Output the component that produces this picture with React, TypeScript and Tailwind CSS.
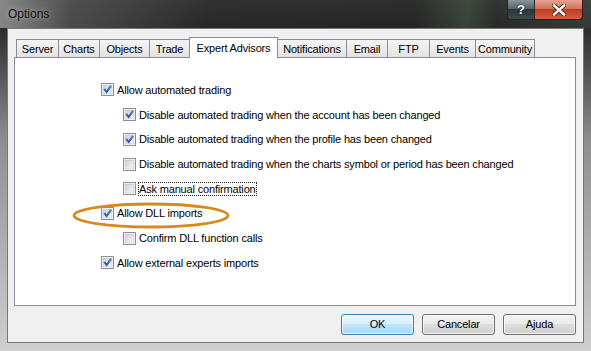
import React from "react";

const tabs = [
  { label: "Server", w: "w-[43px]" },
  { label: "Charts", w: "w-[42px]" },
  { label: "Objects", w: "w-[51px]" },
  { label: "Trade", w: "w-[41px]" },
  { label: "Expert Advisors", w: "w-[89px]", active: true },
  { label: "Notifications", w: "w-[70px]" },
  { label: "Email", w: "w-[42px]" },
  { label: "FTP", w: "w-[43px]" },
  { label: "Events", w: "w-[47px]" },
  { label: "Community", w: "w-[60px]" },
];

const options = [
  { label: "Allow automated trading", level: 1, checked: true },
  { label: "Disable automated trading when the account has been changed", level: 2, checked: true },
  { label: "Disable automated trading when the profile has been changed", level: 2, checked: true },
  { label: "Disable automated trading when the charts symbol or period has been changed", level: 2, checked: false },
  { label: "Ask manual confirmation", level: 2, checked: false, focused: true },
  { label: "Allow DLL imports", level: 1, checked: true },
  { label: "Confirm DLL function calls", level: 2, checked: false },
  { label: "Allow external experts imports", level: 1, checked: true },
];

function CheckBox({ checked }: { checked: boolean }) {
  return (
    <svg width="13" height="13" viewBox="0 0 13 13" className="shrink-0">
      <defs>
        <linearGradient id="cbfill" x1="0" y1="0" x2="1" y2="1">
          <stop offset="0" stopColor="#cbcfd5" />
          <stop offset="1" stopColor="#f7f7f7" />
        </linearGradient>
        <linearGradient id="cbtick" x1="0" y1="0" x2="0" y2="1">
          <stop offset="0" stopColor="#5b8de0" />
          <stop offset="1" stopColor="#1f4aa0" />
        </linearGradient>
      </defs>
      <rect x="0.5" y="0.5" width="12" height="12" fill="#fff" stroke="#8e8f8f" />
      <rect x="2" y="2" width="9" height="9" fill="url(#cbfill)" stroke="#b8bcc2" strokeWidth="0.5" />
      {checked && <polygon points="2.3,6.6 4.1,5.2 5.6,7.2 9.2,2.1 11,3.4 5.7,10.6" fill="url(#cbtick)" />}
    </svg>
  );
}

function Button({ label, primary }: { label: string; primary?: boolean }) {
  return (
    <div
      className={
        primary
          ? "flex h-[21px] w-[73px] items-center justify-center rounded-[3px] border border-[#3c7fb1] bg-[linear-gradient(#eaf6fd_0%,#d9f0fc_45%,#bee6fd_50%,#a7d9f5_100%)] shadow-[inset_0_0_0_1px_rgba(255,255,255,0.7)]"
          : "flex h-[21px] w-[73px] items-center justify-center rounded-[3px] border border-[#707070] bg-[linear-gradient(#f2f2f2_0%,#ebebeb_45%,#dddddd_50%,#cfcfcf_100%)] shadow-[inset_0_0_0_1px_rgba(255,255,255,0.7)]"
      }
    >
      {label}
    </div>
  );
}

export default function App() {
  return (
    <div className="flex h-[351px] w-[591px] flex-col overflow-hidden bg-[linear-gradient(180deg,#3a3a3a_0px,#2c2c2c_28px,#8e8e8e_140px,#cfcfcf_100%)] font-['Liberation_Sans',Arial,sans-serif] text-[11px] tracking-[-0.17px] text-black">
      {/* title bar */}
      <div className="flex h-[28px] shrink-0 items-start justify-between bg-[linear-gradient(90deg,rgba(150,150,150,0.85)_0%,rgba(95,95,95,0.6)_12%,rgba(20,20,20,0.2)_35%,rgba(20,20,20,0.3)_70%,rgba(70,95,70,0.45)_79%,rgba(30,30,30,0.2)_84%,rgba(80,90,80,0.3)_100%)] pl-[8px] pr-[8px]">
        <span className="mt-[7px] text-[12px] leading-[14px] tracking-normal text-[#111] [text-shadow:0_0_6px_rgba(255,255,255,0.6)]">
          Options
        </span>
        <div className="flex h-[20px]">
          <div className="flex w-[28px] items-center justify-center rounded-bl-[4px] border border-t-0 border-[#262626] bg-[linear-gradient(#8a9698_0%,#59646a_45%,#2c3539_50%,#414b4e_100%)] text-[13px] font-bold text-white [text-shadow:0_0_2px_#000]">
            ?
          </div>
          <div className="flex w-[48px] items-center justify-center rounded-br-[4px] border border-l-0 border-t-0 border-[#3a1a14] bg-[linear-gradient(#e6a290_0%,#d2755e_45%,#be3a1f_50%,#d4603f_100%)]">
            <svg width="14" height="12" viewBox="0 0 14 12">
              <path d="M2 1.5 L12 10.5 M12 1.5 L2 10.5" stroke="#3a2a26" strokeWidth="4.2" strokeLinecap="square" />
              <path d="M2 1.5 L12 10.5 M12 1.5 L2 10.5" stroke="#ffffff" strokeWidth="2.4" strokeLinecap="square" />
            </svg>
          </div>
        </div>
      </div>

      {/* client area */}
      <div className="mx-[7px] mb-[8px] flex flex-1 flex-col border border-[#777] bg-[#f0f0f0] pl-[6px] pt-[8px]">
        <div className="ml-[2px] flex h-[20px] items-end">
          {tabs.map((t, i) =>
            t.active ? (
              <div
                key={t.label}
                className={`${t.w} relative z-10 -mb-px ml-[-1px] flex h-[21px] items-start justify-center border border-b-0 border-[#898c95] bg-white pt-[2px]`}
              >
                {t.label}
              </div>
            ) : (
              <div
                key={t.label}
                className={`${t.w} ${i === 0 ? "" : "ml-[-1px]"} flex h-[18px] items-center justify-center border border-b-0 border-[#898c95] bg-[linear-gradient(#f4f4f4_0%,#ececec_50%,#e2e2e2_100%)] pt-[1px]`}
              >
                {t.label}
              </div>
            )
          )}
        </div>

        <div className="relative h-[249px] w-[562px] border border-[#898c95] bg-white pt-[19.6px]">
          {options.map((o) => (
            <div
              key={o.label}
              className={`flex h-[24.7px] items-center gap-[2px] ${o.level === 1 ? "pl-[86px]" : "pl-[108px]"}`}
            >
              <CheckBox checked={o.checked} />
              <span
                className={`border leading-[12px] ${o.focused ? "border-dotted border-[#222]" : "border-transparent"}`}
              >
                {o.label}
              </span>
            </div>
          ))}
          <svg className="absolute left-[57px] top-[144px]" width="158" height="27" viewBox="0 0 158 27">
            <ellipse cx="79" cy="13.5" rx="77" ry="11.5" fill="none" stroke="#d48a1c" strokeWidth="2.8" />
          </svg>
        </div>

        <div className="mt-[8px] flex w-[562px] justify-end gap-[8px]">
          <Button label="OK" primary />
          <Button label="Cancelar" />
          <Button label="Ajuda" />
        </div>
      </div>
    </div>
  );
}
